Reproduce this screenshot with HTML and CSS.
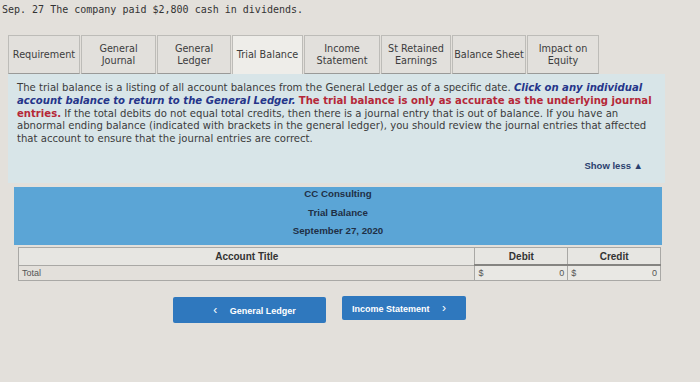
FILE: index.html
```html
<!DOCTYPE html>
<html>
<head>
    <meta charset="UTF-8">
    <title>Trial Balance</title>
    <link rel="stylesheet" href="styles.css">
</head>
<body>
    <div class="problem">Sep. 27 The company paid $2,800 cash in dividends.</div>

    <div class="tabs">
        <div class="tab" style="width: 72px">Requirement</div>
        <div class="tab" style="width: 75px">General<br>Journal</div>
        <div class="tab" style="width: 74px">General<br>Ledger</div>
        <div class="tab active" style="width: 71px">Trial Balance</div>
        <div class="tab" style="width: 76px">Income<br>Statement</div>
        <div class="tab" style="width: 70px">St Retained<br>Earnings</div>
        <div class="tab" style="width: 74px">Balance Sheet</div>
        <div class="tab" style="width: 72px">Impact on<br>Equity</div>
    </div>

    <div class="panel">
        <p class="intro">The trial balance is a listing of all account balances from the General Ledger as of a specific date. <b class="blue">Click on any individual account balance to return to the General Ledger.</b> <b class="red">The trial balance is only as accurate as the underlying journal entries.</b> If the total debits do not equal total credits, then there is a journal entry that is out of balance. If you have an abnormal ending balance (indicated with brackets in the general ledger), you should review the journal entries that affected that account to ensure that the journal entries are correct.</p>
        <div class="show-less">Show less &#9650;</div>
    </div>

    <div class="report">
        <div class="report-head">
            <div>CC Consulting</div>
            <div>Trial Balance</div>
            <div>September 27, 2020</div>
        </div>
        <table class="tb">
            <tr>
                <th class="col-title">Account Title</th>
                <th class="col-amt">Debit</th>
                <th class="col-amt">Credit</th>
            </tr>
            <tr class="total">
                <td>Total</td>
                <td class="amt"><span>$</span><span>0</span></td>
                <td class="amt"><span>$</span><span>0</span></td>
            </tr>
        </table>
    </div>

    <div class="nav">
        <button class="nav-button prev"><span class="arrow">&lsaquo;</span> General Ledger</button>
        <button class="nav-button next">Income Statement <span class="arrow">&rsaquo;</span></button>
    </div>
</body>
</html>
```

FILE: styles.css
```css
body {
    margin: 0;
    width: 700px;
    height: 382px;
    overflow: hidden;
    background: #e3e0db;
    font-family: "DejaVu Sans", Verdana, sans-serif;
    color: #3a3a3a;
}
.problem {
    font-family: "DejaVu Sans Mono", monospace;
    font-size: 10px;
    color: #333;
    padding: 4px 0 0 2px;
    height: 13px;
}
.tabs {
    display: flex;
    margin: 18px 0 0 8px;
    height: 39px;
}
.tab {
    box-sizing: border-box;
    display: flex;
    align-items: center;
    justify-content: center;
    text-align: center;
    font-size: 9.7px;
    line-height: 12px;
    color: #3c3c3c;
    background: #e2e0dc;
    border: 1px solid #bdbcb8;
    border-bottom: 1px solid #9a9a98;
    margin-right: 1px;
}
.tab.active {
    background: #eeede9;
    border-bottom: none;
}
.panel {
    margin-left: 8px;
    width: 657px;
    height: 109px;
    box-sizing: border-box;
    background: #d8e5e8;
    padding: 8px 7px 0 9px;
}
.intro {
    margin: 0;
    font-size: 10.1px;
    line-height: 12.8px;
    color: #3b3b3b;
}
.blue {
    color: #25358a;
    font-style: italic;
}
.red {
    color: #b52838;
}
.show-less {
    text-align: right;
    margin: 14px 15px 0 0;
    font-family: "Liberation Sans", Arial, sans-serif;
    font-weight: bold;
    font-size: 9.5px;
    color: #2a3f6e;
}
.report {
    margin: 4px 0 0 14px;
    width: 648px;
}
.report-head {
    background: #5ba5d6;
    height: 58px;
    box-sizing: border-box;
    display: flex;
    flex-direction: column;
    align-items: center;
    gap: 4.5px;
    padding-top: 0;
    font-family: "Liberation Sans", Arial, sans-serif;
    font-weight: bold;
    font-size: 9.7px;
    line-height: 14px;
    color: #1f2f45;
}
.tb {
    margin: 2px 0 0 4px;
    width: 643px;
    border-collapse: collapse;
    font-family: "Liberation Sans", Arial, sans-serif;
    font-size: 9px;
}
.tb th {
    height: 16px;
    border: 1px solid #a9a8a5;
    background: #e7e6e2;
    color: #333;
    font-weight: bold;
    font-size: 10px;
    padding: 0;
}
.col-title {
    width: 457px;
}
.col-amt {
    width: 92px;
}
.tb td {
    height: 14px;
    border: 1px solid #a9a8a5;
    padding: 0 3px;
    color: #555;
}
.tb td.amt {
    border-top: 2px solid #858481;
    background: #e9e8e4;
}
.amt span {
    display: inline-block;
}
.amt span:last-child {
    float: right;
}
.nav {
    display: flex;
    align-items: flex-start;
    gap: 16px;
    margin: 16px 0 0 173px;
}
.nav-button {
    height: 26px;
    border: none;
    border-radius: 2px;
    background: #2f78be;
    color: white;
    font-family: "Liberation Sans", Arial, sans-serif;
    font-weight: bold;
    font-size: 9px;
    padding: 0;
    cursor: pointer;
}
.prev {
    width: 153px;
}
.next {
    width: 124px;
    height: 24px;
    margin-top: -1px;
}
.arrow {
    font-size: 12px;
    font-weight: normal;
    padding: 0 10px;
}
```
